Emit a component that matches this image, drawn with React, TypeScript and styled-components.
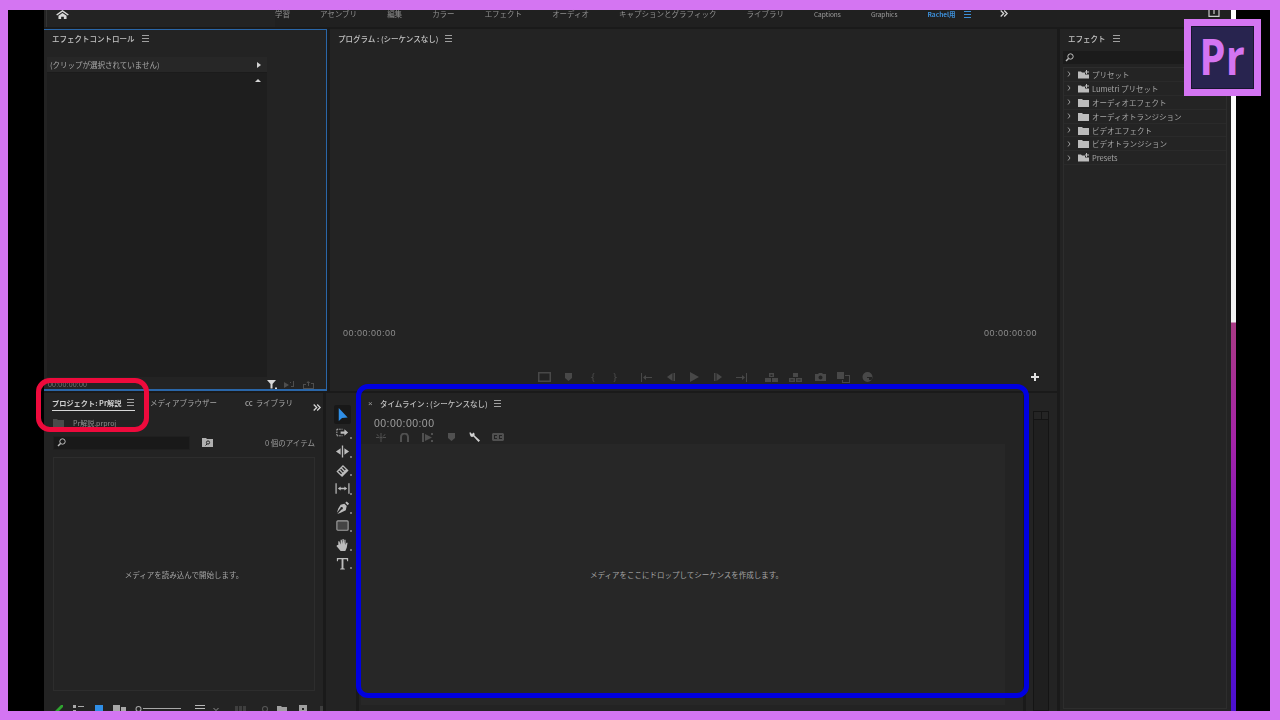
import React from 'react'
import styled, { createGlobalStyle } from 'styled-components'

const GlobalStyle = createGlobalStyle`
  html, body {
    margin: 0;
    padding: 0;
    background: #d475f2;
  }
  body {
    font-family: "Noto Sans CJK JP", "Liberation Sans", sans-serif;
  }
`

const Frame = styled.div`
  position: relative;
  box-sizing: border-box;
  width: 1280px;
  height: 720px;
  overflow: hidden;
  background: #d475f2;
  padding: 10px 10px 9px 8px;
`

const Desktop = styled.div`
  display: flex;
  height: 100%;
  background: #000;
  padding-left: 36px;
`

const Workspace = styled.div`
  display: flex;
  flex-direction: column;
  width: 1187px;
  height: 100%;
  background: #1a1a1a;
  filter: blur(0.35px);
`

const EdgeLine = styled.div`
  width: 5px;
  height: 100%;
  background: linear-gradient(
    #fff 0,
    #f2f2f2 312px,
    #a83a84 313px,
    #a524a8 430px,
    #6a10c8 590px,
    #4a10d0 100%
  );
`

const Header = styled.header`
  display: flex;
  align-items: flex-start;
  height: 17px;
  background: #202020;
`

const HomeSlot = styled.div`
  box-sizing: border-box;
  width: 231px;
  height: 100%;
  background: linear-gradient(#333, #333) 2px 0 / 1px 100% no-repeat #232323;
  padding-left: 12px;
  color: #d8d8d8;
  svg { display: block; }
`

const WorkspaceTabs = styled.nav`
  display: flex;
  gap: 30px;
  height: 100%;
`

const WorkspaceTab = styled.span<{ $active?: boolean; $latin?: boolean }>`
  font-size: ${p => (p.$latin ? '6.5px' : '7.5px')};
  line-height: 8px;
  white-space: nowrap;
  color: ${p => (p.$active ? '#3d8fd8' : p.$latin ? '#a0a0a0' : '#8f8f8f')};
  font-weight: ${p => (p.$active ? 700 : 400)};
`

const Burger = styled.span<{ $color?: string }>`
  display: inline-block;
  width: 7px;
  height: 5px;
  flex: none;
  border-top: 1px solid ${p => p.$color ?? '#a0a0a0'};
  border-bottom: 1px solid ${p => p.$color ?? '#a0a0a0'};
  background: linear-gradient(${p => p.$color ?? '#a0a0a0'}, ${p => p.$color ?? '#a0a0a0'}) center / 100% 1px no-repeat;
`

const HeaderEnd = styled.div`
  display: flex;
  flex: 1;
  align-items: flex-start;
  color: #c8c8c8;
  height: 100%;
`

const Spaced = styled.span<{ $left?: number; $top?: number; $color?: string }>`
  display: flex;
  flex: none;
  margin-left: ${p => p.$left ?? 0}px;
  margin-top: ${p => p.$top ?? 0}px;
  color: ${p => p.$color ?? 'inherit'};
  svg { display: block; }
`

const Body = styled.div`
  display: flex;
  flex: 1;
  min-height: 0;
  margin-top: 2px;
  gap: 3px;
`

const MainColumn = styled.div`
  display: flex;
  flex-direction: column;
  width: 1013px;
  gap: 2px;
`

const TopRow = styled.div`
  display: flex;
  height: 362px;
  gap: 3px;
`

const BottomRow = styled.div`
  display: flex;
  flex: 1;
  min-height: 0;
  gap: 3px;
`

const Panel = styled.section`
  display: flex;
  flex-direction: column;
  box-sizing: border-box;
  background: #232323;
  min-width: 0;
  overflow: hidden;
`

const EffectControlPanel = styled(Panel)`
  width: 283px;
  border: 1px solid #2a66a8;
  border-left: 0;
  border-bottom-width: 2px;
  padding-left: 3px;
`

const ProgramPanel = styled(Panel)`
  flex: 1;
  padding: 0 7px 0 8px;
`

const TitleRow = styled.div`
  display: flex;
  flex: none;
  align-items: center;
  gap: 7px;
  height: 19px;
  font-size: 7.5px;
  font-weight: 500;
  color: #c4c4c4;
  white-space: nowrap;
`

const EffectTitle = styled(TitleRow)`
  padding-left: 5px;
  margin-top: -1px;
  margin-bottom: 9px;
`

const ClipHeader = styled.div`
  display: flex;
  flex: none;
  align-items: center;
  justify-content: space-between;
  box-sizing: border-box;
  width: 220px;
  height: 16px;
  background: #272727;
  padding: 0 6px 0 3px;
  font-size: 7.5px;
  color: #aaa;
  border-bottom: 1px solid #1b1b1b;
`

const ArrowRight = styled.i`
  width: 0;
  height: 0;
  border-left: 4px solid #d4d4d4;
  border-top: 3px solid transparent;
  border-bottom: 3px solid transparent;
`

const ClipBody = styled.div`
  display: flex;
  flex: 1;
  justify-content: flex-end;
  width: 220px;
  background: #1e1e1e;
  padding-top: 6px;
  padding-right: 6px;
  box-sizing: border-box;
`

const ArrowUp = styled.i`
  width: 0;
  height: 0;
  border-bottom: 3px solid #d4d4d4;
  border-left: 3px solid transparent;
  border-right: 3px solid transparent;
`

const ClipFooter = styled.div`
  display: flex;
  flex: none;
  align-items: center;
  box-sizing: border-box;
  height: 12px;
  padding-top: 3px;
  font-size: 7px;
  color: #777;
  gap: 7px;
  svg { display: block; flex: none; }
`

const FooterTime = styled.span`
  width: 212px;
  margin-left: 1px;
  letter-spacing: 0.2px;
  font-family: "Liberation Sans", sans-serif;
`

const ProgramView = styled.div`
  flex: 1;
  display: flex;
  align-items: flex-end;
  justify-content: space-between;
  padding: 0 13px 25px 5px;
  font-size: 9px;
  letter-spacing: 0.5px;
  color: #8c8c8c;
  font-family: "Liberation Sans", sans-serif;
`

const Transport = styled.div`
  display: flex;
  align-items: center;
  height: 28px;
  padding-left: 199px;
  color: #484848;
  svg { display: block; flex: none; }
`

const TransportItem = styled.span<{ $left: number }>`
  display: flex;
  justify-content: center;
  width: 14px;
  margin-left: ${p => p.$left}px;
`

const ProjectPanel = styled(Panel)`
  width: 279px;
`

const TabRow = styled.div`
  display: flex;
  flex: none;
  align-items: flex-end;
  height: 18px;
  padding-left: 8px;
  font-size: 7.5px;
  color: #a8a8a8;
  white-space: nowrap;
`

const ActiveTab = styled.div`
  display: flex;
  align-items: center;
  justify-content: space-between;
  padding-right: 1px;
  width: 83px;
  height: 16px;
  box-sizing: border-box;
  border-bottom: 1px solid #d8d8d8;
  color: #d0d0d0;
  font-weight: 700;
  font-size: 7.2px;
`

const Tab = styled.span<{ $left: number }>`
  margin-left: ${p => p.$left}px;
  height: 16px;
  line-height: 15px;
`

const SmallCaps = styled.span`
  font-size: 6px;
  font-weight: 700;
  margin-right: 3px;
`

const FileRow = styled.div`
  display: flex;
  flex: none;
  align-items: center;
  gap: 9px;
  height: 23px;
  margin-bottom: 1px;
  padding-left: 9px;
  font-size: 7px;
  color: #8f8f8f;
  svg { display: block; }
`

const SearchRow = styled.div`
  display: flex;
  flex: none;
  align-items: center;
  height: 15px;
  padding: 0 8px 0 9px;
  font-size: 7.5px;
  color: #9a9a9a;
  svg { display: block; flex: none; }
`

const SearchField = styled.div`
  display: flex;
  align-items: center;
  box-sizing: border-box;
  width: 137px;
  height: 14px;
  background: #191919;
  padding-left: 3px;
  color: #bdbdbd;
  border: 1px solid #1f1f1f;
`

const FolderSlot = styled.div`
  width: 34px;
  display: flex;
  justify-content: center;
  color: #b0b0b0;
`

const ItemCount = styled.div`
  flex: 1;
  text-align: right;
  white-space: nowrap;
`

const MediaBox = styled.div`
  display: flex;
  align-items: center;
  justify-content: center;
  flex: 1;
  margin: 7px 8px 20px 9px;
  background: #242424;
  border: 1px solid #2d2d2d;
  font-size: 7.5px;
  color: #a4a4a4;
`

const ProjectFooter = styled.div`
  display: flex;
  flex: none;
  align-items: flex-start;
  padding-left: 11px;
  margin-top: -6px;
  height: 6px;
  overflow: hidden;
  color: #b4b4b4;
`

const ToolsPanel = styled(Panel)`
  width: 30px;
  padding: 12px 0 0 8px;
  align-items: flex-start;
`

const ToolButton = styled.div<{ $selected?: boolean }>`
  position: relative;
  display: flex;
  flex: none;
  align-items: center;
  justify-content: center;
  width: 17px;
  height: 18.6px;
  background: ${p => (p.$selected ? '#181818' : 'transparent')};
  border-radius: 2px;
  color: #bcbcbc;
  svg { display: block; }
  &::after {
    content: '';
    display: ${p => (p.$selected ? 'none' : 'block')};
    position: absolute;
    right: -1px;
    bottom: 3px;
    width: 2px;
    height: 2px;
    background: #777;
  }
`

const TimelinePanel = styled(Panel)`
  width: 664px;
`

const TimelineHead = styled.div`
  flex: none;
  padding-left: 8px;
`

const TimelineTitle = styled.div`
  display: flex;
  align-items: center;
  gap: 6px;
  height: 20px;
  font-size: 7.5px;
  font-weight: 500;
  color: #c0c0c0;
  white-space: nowrap;
`

const CloseMark = styled.span`
  font-size: 8px;
  color: #9a9a9a;
  width: 6px;
  margin-left: 1px;
  font-family: "Liberation Sans", sans-serif;
`

const Timecode = styled.div`
  height: 14px;
  padding-left: 7px;
  margin-top: 3px;
  font-size: 10.5px;
  line-height: 14px;
  letter-spacing: 0.45px;
  color: #9e9e9e;
  font-family: "Liberation Sans", sans-serif;
`

const TimelineTools = styled.div`
  display: flex;
  align-items: center;
  height: 14px;
  padding-left: 2px;
  color: #505050;
  svg { display: block; }
`

const TimelineTool = styled.span<{ $on?: boolean }>`
  display: flex;
  justify-content: center;
  width: 23.5px;
  color: ${p => (p.$on ? '#d0d0d0' : '#505050')};
`

const DropZone = styled.div`
  display: flex;
  flex: 1;
  margin: 0 18px 6px 2px;
  padding-left: 7px;
  align-items: center;
  justify-content: center;
  background: #272727;
  font-size: 7.5px;
  color: #a4a4a4;
`

const MeterPanel = styled(Panel)`
  flex: 1;
  padding: 18px 8px 0 7px;
`

const Meter = styled.div`
  flex: 1;
  display: flex;
  flex-direction: column;
  background: #1f1f1f;
  border: 1px solid #141414;
`

const MeterCap = styled.div`
  height: 7px;
  border-bottom: 1px solid #141414;
  background: linear-gradient(#141414, #141414) center / 1px 100% no-repeat #242424;
`

const EffectsPanel = styled(Panel)`
  width: 171px;
  padding: 0 4px 0 3px;
`

const EffectsTitle = styled(TitleRow)`
  padding-left: 5px;
  margin-bottom: 3px;
`

const EffectsSearch = styled.div`
  display: flex;
  flex: none;
  align-items: center;
  height: 13px;
  background: #1b1b1b;
  padding-left: 2px;
  color: #c0c0c0;
  margin-bottom: 3px;
  svg { display: block; }
`

const EffectsList = styled.ul`
  flex: 1;
  list-style: none;
  margin: 0 0 2px;
  padding: 0;
  background: #242424;
  border: 1px solid #2d2d2d;
`

const EffectRow = styled.li`
  display: flex;
  align-items: center;
  box-sizing: border-box;
  height: 13.9px;
  padding-left: 3px;
  border-bottom: 1px solid #2a2a2a;
  font-size: 7.5px;
  color: #a6a6a6;
  white-space: nowrap;
  svg { display: block; flex: none; }
`

const RowChevron = styled.span`
  width: 11px;
  display: flex;
  color: #9a9a9a;
`

const RowIcon = styled.span`
  width: 14px;
  color: #bcbcbc;
`

const Logo = styled.div`
  position: absolute;
  left: 1184px;
  top: 19px;
  box-sizing: border-box;
  width: 77px;
  height: 77px;
  background: #28244f;
  border: 7px solid #d475f2;
  box-shadow: inset 0 0 0 1px #17162f;
  display: flex;
  align-items: center;
  justify-content: center;
`

const LogoText = styled.span`
  font-family: "Open Sans", "Liberation Sans", sans-serif;
  font-size: 50px;
  font-weight: 700;
  line-height: 50px;
  letter-spacing: 0;
  color: #d475f2;
  transform: scaleX(0.84) translateY(-2px);
`

const Callout = styled.div<{ $x: number; $y: number; $w: number; $h: number; $c: string; $r: number }>`
  position: absolute;
  box-sizing: border-box;
  left: ${p => p.$x}px;
  top: ${p => p.$y}px;
  width: ${p => p.$w}px;
  height: ${p => p.$h}px;
  border: 5px solid ${p => p.$c};
  border-radius: ${p => p.$r}px;
`

const HomeIcon = () => (
  <svg width="13" height="9" viewBox="0 0 14 10" fill="currentColor">
    <path d="M7 0 0 5l1 1 6-4 6 4 1-1zM2.500 6.500V10h3V7.500h3V10h3V6.500L7 3.200z" />
  </svg>
)

const ExportIcon = () => (
  <svg width="12" height="7" viewBox="0 0 12 7" fill="none" stroke="currentColor" strokeWidth="1.2">
    <path d="M1 0v6.400h10V0M6 4V0" />
  </svg>
)

const DoubleChevron = () => (
  <svg width="8" height="7" viewBox="0 0 8 7" fill="none" stroke="#d4d4d4" strokeWidth="1.300">
    <path d="m.7.500 3 3-3 3M4.200.500l3 3-3 3" />
  </svg>
)

const SearchGlass = () => (
  <svg width="9" height="9" viewBox="0 0 9 9" fill="none" stroke="currentColor" strokeWidth="1">
    <circle cx="5.500" cy="3.500" r="2.700" />
    <path d="M3.500 5.500 1 8" strokeWidth="1.400" />
  </svg>
)

const FolderIcon = ({ star }: { star?: boolean }) => (
  <svg width="11" height="9" viewBox="0 0 11 9" fill="currentColor">
    <path d={star ? 'M0 1.500h3l1 1h3v2h4v4H0z' : 'M0 1h4l1 1h6v7H0z'} />
    {star && <path d="M9 0v1.500h2v1H9V4H8V2.500H7v-1h1V0z" />}
  </svg>
)

const BinFolderIcon = () => (
  <svg width="11" height="9" viewBox="0 0 11 9">
    <path d="M0 0h4l1 1h6v8H0z" fill="currentColor" />
    <circle cx="6" cy="4.500" r="1.600" fill="none" stroke="#232323" />
    <path d="M5 6 3.500 7.500" stroke="#232323" />
  </svg>
)

const Chevron = () => (
  <svg width="4" height="6" viewBox="0 0 4 6" fill="none" stroke="currentColor" strokeWidth="1">
    <path d="m1 .5 2 2.500-2 2.500" />
  </svg>
)

const icons: Record<string, React.ReactNode> = {
  select: <path d="M4 .5v14l3.500-3.400 6-.3z" fill="#2f8ee6" />,
  trackSelect: (
    <>
      <path d="M2 4h6M2 4v7M2 11h6" stroke="currentColor" strokeDasharray="1.500 1" fill="none" />
      <path d="M6 6.300h4V4l4 3.500-4 3.500V8.700H6z" fill="currentColor" />
    </>
  ),
  ripple: <path d="M7.300 1h1.400v13H7.300zM1 7.500 6 4v7zM15 7.500 10 4v7z" fill="currentColor" />,
  razor: (
    <path
      d="M8.500 1.500 14.500 7.500 7.500 14.500 1.500 8.500zM8.500 3.500 7.500 4.500l3 3 1-1zM6.500 5.500l-1 1 3 3 1-1zM4.500 7.500l-1 1 3 3 1-1z"
      fill="currentColor"
      fillRule="evenodd"
    />
  ),
  slip: (
    <>
      <path d="M.500 2h1.300v11H.500zM14.200 2h1.300v11h-1.300z" fill="currentColor" />
      <path d="M3 7.500 6 5.300v1.500h4V5.300l3 2.200-3 2.200V8.200H6v1.500z" fill="currentColor" />
    </>
  ),
  pen: (
    <path
      d="M12.500 1 15 3.500 13.500 5 11 2.500zM10 3.500 12.500 6l-1 4.500L6 13l-3.500 1.500L7 9.500a1.300 1.300 0 1 0-1.200-1.200L2 13l1.500-4.500L6 4.500z"
      fill="currentColor"
    />
  ),
  rect: <rect x="2" y="2.500" width="12" height="10" rx="1" fill="#444" stroke="#a0a0a0" strokeWidth="1.200" />,
  hand: (
    <path
      d="M3.500 8V4h1.100L6 7.500V2.500h1.200L8 7V1.500h1.200L10 7V2.500h1.200V8l1-2.500h1.200L12.500 11l-1.500 3.500H6L1.500 9l1-1z"
      fill="currentColor"
    />
  ),
  type: <path d="M2 1.500h12V5h-1l-.5-2H9v9.500l1.500.5v1h-5v-1l1.500-.5V3H3.500L3 5H2z" fill="currentColor" />,
}

const ToolIcon = ({ name }: { name: string }) => (
  <svg width="15" height="15" viewBox="0 0 16 15">
    {icons[name]}
  </svg>
)

const Glyph = ({ w = 12, h = 9, d, fill = true }: { w?: number; h?: number; d: string; fill?: boolean }) => (
  <svg
    width={w}
    height={h}
    viewBox={`0 0 ${w} ${h}`}
    fill={fill ? 'currentColor' : 'none'}
    stroke={fill ? 'none' : 'currentColor'}
  >
    <path d={d} fillRule="evenodd" />
  </svg>
)

const transport: { left: number; icon: React.ReactNode }[] = [
  { left: 0, icon: <Glyph w={13} h={10} d="M0 0h13v10H0zM1.500 1.500v7h10v-7z" /> },
  { left: 10, icon: <Glyph w={7} h={8} d="M0 0h7v5L3.500 8 0 5z" /> },
  { left: 11, icon: <Glyph w={4} h={9} d="M3.500 0C2 0 2 1 2 4 2 4.500 1 4.500 .5 4.500 1 4.500 2 4.500 2 5c0 3 0 4 1.500 4" fill={false} /> },
  { left: 8, icon: <Glyph w={4} h={9} d="M.5 0C2 0 2 1 2 4c0 .5 1 .5 1.500.5C3 4.500 2 4.500 2 5c0 3 0 4-1.500 4" fill={false} /> },
  { left: 17, icon: <Glyph w={11} h={9} d="M0 0h1v9H0zM2 4.500 5 2v2h6v1H5v2z" /> },
  { left: 11, icon: <Glyph w={8} h={8} d="M6.500 0H8v8H6.500zM0 4l5.500-4v8z" /> },
  { left: 9, icon: <Glyph w={9} h={10} d="M0 0l9 5-9 5z" /> },
  { left: 10, icon: <Glyph w={8} h={8} d="M0 0h1.500v8H0zM2.500 0 8 4 2.500 8z" /> },
  { left: 9, icon: <Glyph w={11} h={9} d="M10 0h1v9h-1zM9 4.500 6 2v2H0v1h6v2z" /> },
  { left: 16, icon: <Glyph w={13} h={9} d="M4 0h5v4H4zM0 5h6v4H0zM7 5h6v4H7zM5.500 1.500v1.500h2V1.500z" /> },
  { left: 10, icon: <Glyph w={13} h={9} d="M4 0h5v4H4zM0 5h6v4H0zM7 5h6v4H7zM1.500 6.500v1h3v-1zM8.500 6.500v1h3v-1z" /> },
  { left: 11, icon: <Glyph w={11} h={8} d="M0 1h3l1-1h3l1 1h3v7H0zM5.500 2.500a2 2 0 1 0 0 4 2 2 0 0 0 0-4z" /> },
  { left: 9, icon: <Glyph w={13} h={11} d="M0 0h7v7H0zM8 3h5v8H5V8h1v2h6V4H8z" /> },
  { left: 10, icon: <Glyph w={11} h={10} d="M5.500 0a5 5 0 1 0 0 10 5 5 0 0 0 0-10zM5 5h5v3H7V6H5z" /> },
]

const timelineTools: { on?: boolean; icon: React.ReactNode }[] = [
  { icon: <Glyph w={10} h={9} d="M4.500 0h1v3h-1zM0 4h3v1H0zM7 4h3v1H7zM4.500 6h1v3h-1zM1 1l2 2-.6.6-2-2zM9 1 7 3l.6.6 2-2zM3.500 3.500h3v2h-3z" /> },
  { icon: <Glyph w={9} h={9} d="M0 9V4a4.500 4.500 0 0 1 9 0v5H7V4a2.500 2.500 0 0 0-5 0v5z" /> },
  { icon: <Glyph w={11} h={9} d="M0 0h2v9H0zM9 0h2v2H9zM9 7h2v2H9zM3 1l7 3.500L3 8z" /> },
  { icon: <Glyph w={7} h={8} d="M0 0h7v5L3.500 8 0 5z" /> },
  { on: true, icon: <Glyph w={11} h={10} d="M1 0 3 2 4.500.5a2.500 2.500 0 0 1 1 3L11 8.500 9.500 10 4.500 4.500a2.500 2.500 0 0 1-3.500-1.500L.5 1z" /> },
  { icon: <Glyph w={12} h={8} d="M1 0h10l1 1v6l-1 1H1L0 7V1zM2 2v4h3V5H3V3h2V2zM7 2v4h3V5H8V3h2V2z" /> },
]

const projectTools: { left: number; color: string; w: number; d: string }[] = [
  { left: 0, color: '#2fa32f', w: 8, d: 'M6 0h2v2L2 8H0V6z' },
  { left: 10, color: '#a8a8a8', w: 11, d: 'M0 0h3v3H0zM5 1h6v1H5zM0 5h3v3H0zM5 6h6v1H5z' },
  { left: 11, color: '#2f8ee6', w: 8, d: 'M0 0h8v8H0z' },
  { left: 10, color: '#a8a8a8', w: 13, d: 'M0 0h7v8H0zM8 2h5v6H8z' },
  { left: 9, color: '#a8a8a8', w: 46, d: 'M3.500 1a3 3 0 1 0 0 6 3 3 0 0 0 0-6zm0 1a2 2 0 1 1 0 4 2 2 0 0 1 0-4zM8 3h38v1H8z' },
  { left: 14, color: '#b8b8b8', w: 10, d: 'M0 0h10v1H0zM0 3h10v1H0zM0 6h10v1H0z' },
  { left: 8, color: '#8a8a8a', w: 6, d: 'M0 3h1l2 2 2-2h1L3 6z' },
  { left: 16, color: '#3f3f3f', w: 12, d: 'M0 1h3v7H0zM4 1h3v7H4zM8 1h3v7H8z' },
  { left: 15, color: '#585858', w: 6, d: 'M3 1a3 3 0 1 0 0 6 3 3 0 0 0 0-6zm0 1a2 2 0 1 1 0 4 2 2 0 0 1 0-4z' },
  { left: 9, color: '#a0a0a0', w: 10, d: 'M0 1h4l1 1h5v6H0z' },
  { left: 12, color: '#a0a0a0', w: 8, d: 'M0 0h8v8H0zM3 3v2h2V3z' },
  { left: 13, color: '#3f3f3f', w: 3, d: 'M0 1h3v7H0z' },
]

const effects = [
  { label: 'プリセット', star: true },
  { label: 'Lumetri プリセット', star: true },
  { label: 'オーディオエフェクト' },
  { label: 'オーディオトランジション' },
  { label: 'ビデオエフェクト' },
  { label: 'ビデオトランジション' },
  { label: 'Presets', star: true },
]

const workspaces = ['学習', 'アセンブリ', '編集', 'カラー', 'エフェクト', 'オーディオ', 'キャプションとグラフィック', 'ライブラリ']

const toolNames = ['select', 'trackSelect', 'ripple', 'razor', 'slip', 'pen', 'rect', 'hand', 'type']

export default function App() {
  return (
    <Frame>
      <GlobalStyle />
      <Desktop>
        <Workspace>
          <Header>
            <HomeSlot>
              <HomeIcon />
            </HomeSlot>
            <WorkspaceTabs>
              {workspaces.map(name => (
                <WorkspaceTab key={name}>{name}</WorkspaceTab>
              ))}
              <WorkspaceTab $latin>Captions</WorkspaceTab>
              <WorkspaceTab $latin>Graphics</WorkspaceTab>
              <WorkspaceTab $latin $active>Rachel用</WorkspaceTab>
            </WorkspaceTabs>
            <HeaderEnd>
              <Spaced $left={8} $top={1}>
                <Burger $color="#3d8fd8" />
              </Spaced>
              <Spaced $left={29}>
                <DoubleChevron />
              </Spaced>
              <Spaced $left={200}>
                <ExportIcon />
              </Spaced>
            </HeaderEnd>
          </Header>
          <Body>
            <MainColumn>
              <TopRow>
                <EffectControlPanel>
                  <EffectTitle>
                    エフェクトコントロール
                    <Burger />
                  </EffectTitle>
                  <ClipHeader>
                    (クリップが選択されていません)
                    <ArrowRight />
                  </ClipHeader>
                  <ClipBody>
                    <ArrowUp />
                  </ClipBody>
                  <ClipFooter>
                    <FooterTime>00:00:00:00</FooterTime>
                    <Spaced $color="#d8d8d8">
                      <Glyph w={10} h={9} d="M0 0h9L5.500 4v4.500h-2V4zM8 7.500h2V9H8z" />
                    </Spaced>
                    <Spaced $color="#4e4e4e">
                      <Glyph w={12} h={8} d="M0 1l5 3-5 3zM9 0h1v6H7V5h2zM6 1h1v1H6z" />
                    </Spaced>
                    <Spaced $color="#4e4e4e">
                      <Glyph w={11} h={8} d="M0 3h3v1H1v3h9V3H8V2h3v6H0zM5 0l2.500 2H6v3H5V2H3.500z" />
                    </Spaced>
                  </ClipFooter>
                </EffectControlPanel>
                <ProgramPanel>
                  <TitleRow>
                    プログラム : (シーケンスなし)
                    <Burger />
                  </TitleRow>
                  <ProgramView>
                    <span>00:00:00:00</span>
                    <span>00:00:00:00</span>
                  </ProgramView>
                  <Transport>
                    {transport.map((item, i) => (
                      <TransportItem key={i} $left={item.left}>
                        {item.icon}
                      </TransportItem>
                    ))}
                    <Spaced $left={157} $color="#e0e0e0">
                      <Glyph w={8} h={8} d="M3 0h2v3h3v2H5v3H3V5H0V3h3z" />
                    </Spaced>
                  </Transport>
                </ProgramPanel>
              </TopRow>
              <BottomRow>
                <ProjectPanel>
                  <TabRow>
                    <ActiveTab>
                      プロジェクト: Pr解説
                      <Burger />
                    </ActiveTab>
                    <Tab $left={15}>メディアブラウザー</Tab>
                    <Tab $left={28}>
                      <SmallCaps>CC</SmallCaps>ライブラリ
                    </Tab>
                    <Spaced $left={20} $top={-11}>
                      <DoubleChevron />
                    </Spaced>
                  </TabRow>
                  <FileRow>
                    <Spaced $color="#4a4a4a">
                      <FolderIcon />
                    </Spaced>
                    Pr解説.prproj
                  </FileRow>
                  <SearchRow>
                    <SearchField>
                      <SearchGlass />
                    </SearchField>
                    <FolderSlot>
                      <BinFolderIcon />
                    </FolderSlot>
                    <ItemCount>0 個のアイテム</ItemCount>
                  </SearchRow>
                  <MediaBox>メディアを読み込んで開始します。</MediaBox>
                  <ProjectFooter>
                    {projectTools.map((tool, i) => (
                      <Spaced key={i} $left={tool.left} $color={tool.color}>
                        <Glyph w={tool.w} h={8} d={tool.d} />
                      </Spaced>
                    ))}
                  </ProjectFooter>
                </ProjectPanel>
                <ToolsPanel>
                  {toolNames.map((name, i) => (
                    <ToolButton key={name} $selected={i === 0}>
                      <ToolIcon name={name} />
                    </ToolButton>
                  ))}
                </ToolsPanel>
                <TimelinePanel>
                  <TimelineHead>
                    <TimelineTitle>
                      <CloseMark>×</CloseMark>
                      タイムライン : (シーケンスなし)
                      <Burger />
                    </TimelineTitle>
                    <Timecode>00:00:00:00</Timecode>
                    <TimelineTools>
                      {timelineTools.map((tool, i) => (
                        <TimelineTool key={i} $on={tool.on}>
                          {tool.icon}
                        </TimelineTool>
                      ))}
                    </TimelineTools>
                  </TimelineHead>
                  <DropZone>メディアをここにドロップしてシーケンスを作成します。</DropZone>
                </TimelinePanel>
                <MeterPanel>
                  <Meter>
                    <MeterCap />
                  </Meter>
                </MeterPanel>
              </BottomRow>
            </MainColumn>
            <EffectsPanel>
              <EffectsTitle>
                エフェクト
                <Burger />
              </EffectsTitle>
              <EffectsSearch>
                <SearchGlass />
              </EffectsSearch>
              <EffectsList>
                {effects.map(effect => (
                  <EffectRow key={effect.label}>
                    <RowChevron>
                      <Chevron />
                    </RowChevron>
                    <RowIcon>
                      <FolderIcon star={effect.star} />
                    </RowIcon>
                    {effect.label}
                  </EffectRow>
                ))}
              </EffectsList>
            </EffectsPanel>
          </Body>
        </Workspace>
        <EdgeLine />
      </Desktop>
      <Callout $x={36} $y={378} $w={113} $h={54} $c="#ee0a3c" $r={14} />
      <Callout $x={356} $y={384} $w={673} $h={314} $c="#0000e0" $r={12} />
      <Logo>
        <LogoText>Pr</LogoText>
      </Logo>
    </Frame>
  )
}
